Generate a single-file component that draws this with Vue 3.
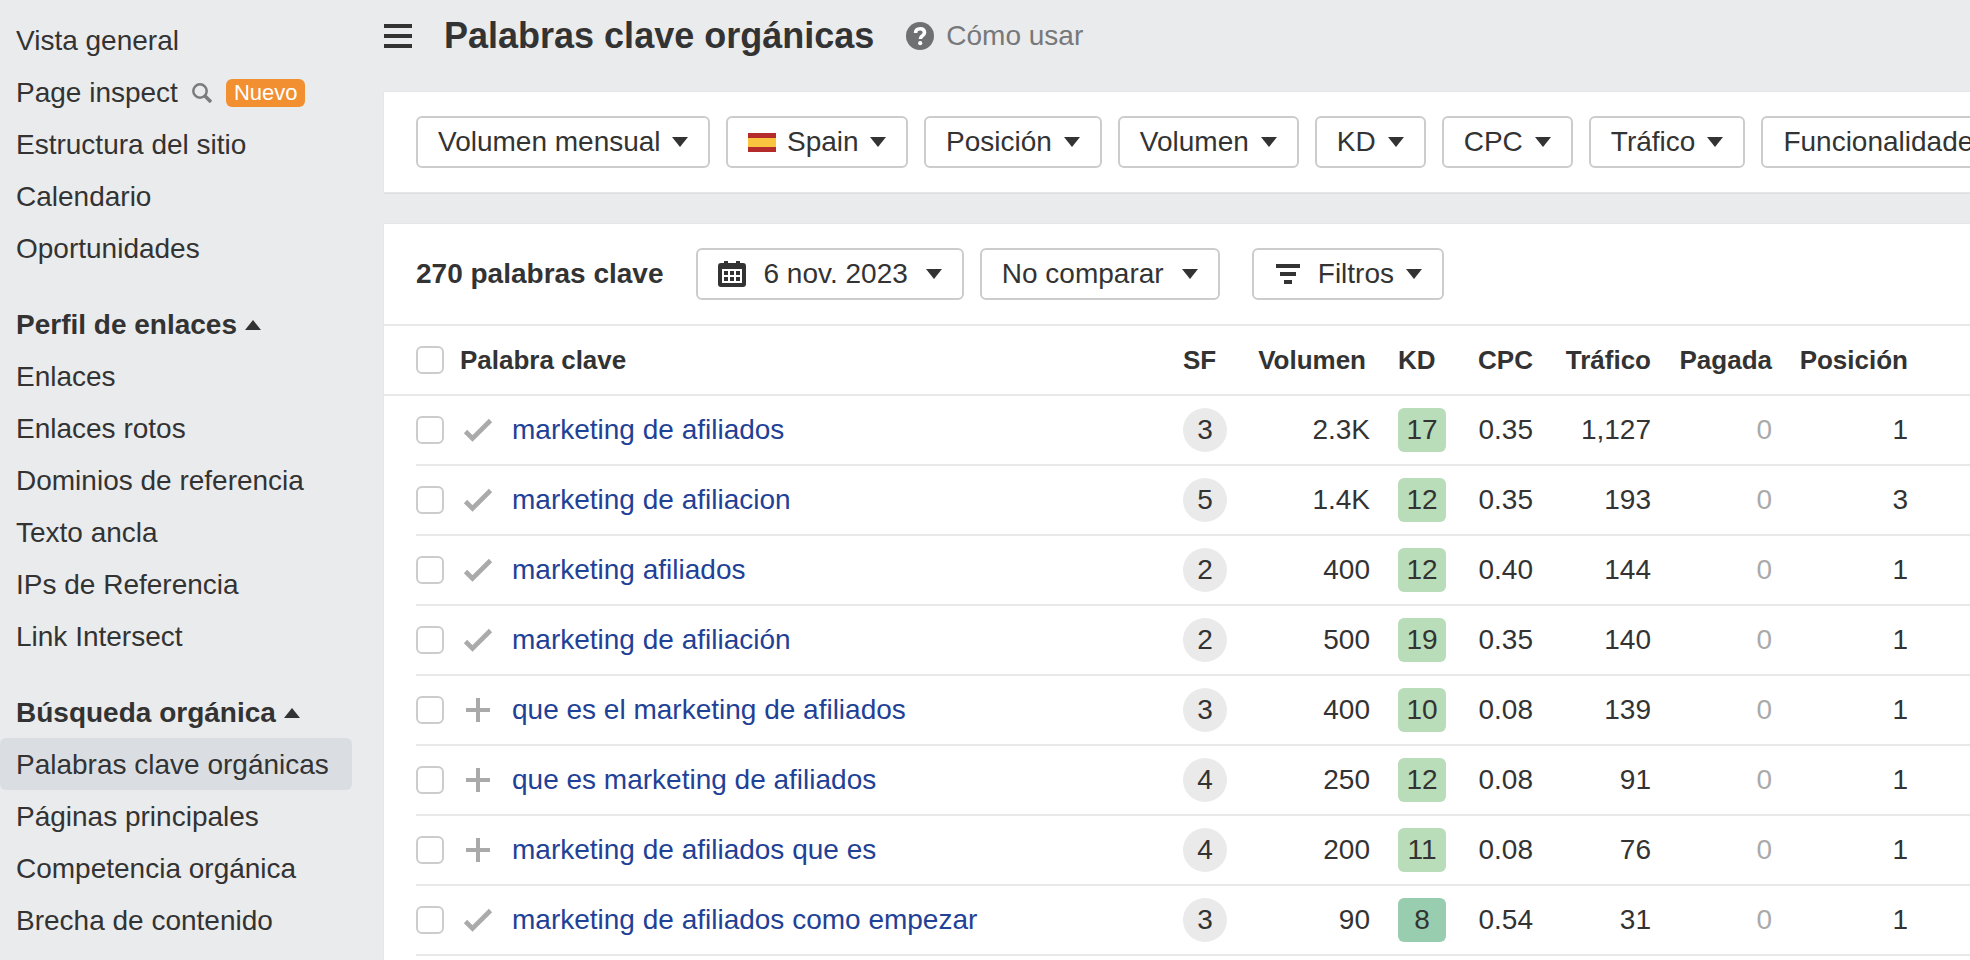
<template>
    <div class="page">
        <nav class="sidebar" v-show="menuOpen">
            <section v-for="(group, i) in groups" :key="i" class="group">
                <button v-if="group.title" type="button" class="group-title" :aria-expanded="group.open" @click="group.open = !group.open">
                    {{ group.title }}
                    <svg class="caret" :class="{ 'caret-up': group.open }" viewBox="0 0 16 10"><path d="M0 0h16L8 10z" /></svg>
                </button>
                <ul v-show="group.open">
                    <li v-for="item in group.items" :key="item">
                        <a href="#" class="nav-link" :class="{ active: item === current }" @click.prevent="current = item">
                            {{ item }}
                            <template v-if="item === 'Page inspect'">
                                <svg class="search" viewBox="0 0 20 20">
                                    <circle cx="8" cy="8" r="6.7" />
                                    <path d="M13 13l6 6" />
                                </svg>
                                <span class="badge-new">Nuevo</span>
                            </template>
                        </a>
                    </li>
                </ul>
            </section>
        </nav>

        <main class="content">
            <header class="header">
                <button type="button" class="burger" aria-label="Menú" @click="menuOpen = !menuOpen">
                    <svg viewBox="0 0 28 24"><path d="M0 0h28v4H0zM0 10h28v4H0zM0 20h28v4H0z" /></svg>
                </button>
                <h1>Palabras clave orgánicas</h1>
                <a href="#" class="help">
                    <svg viewBox="0 0 28 28">
                        <circle cx="14" cy="14" r="14" />
                        <path class="mark" d="M9.6 11c0-2.6 1.8-4.2 4.5-4.2s4.4 1.5 4.4 3.8c0 1.6-.8 2.4-2.1 3.2-1.4.9-2 1.4-2 3.1" />
                        <circle class="dot" cx="14.2" cy="21.2" r="2.1" />
                    </svg>
                    Cómo usar
                </a>
            </header>

            <section class="panel filters">
                <div class="control value">
                    <select aria-label="Volumen">
                        <option>Volumen mensual</option>
                    </select>
                    <svg class="caret" viewBox="0 0 16 10"><path d="M0 0h16L8 10z" /></svg>
                </div>
                <div class="control value">
                    <svg class="flag" viewBox="0 0 28 19">
                        <path fill="#b52a2a" d="M0 0h28v19H0z" />
                        <path fill="#f9c440" d="M0 5h28v9H0z" />
                    </svg>
                    <select aria-label="País">
                        <option>Spain</option>
                    </select>
                    <svg class="caret" viewBox="0 0 16 10"><path d="M0 0h16L8 10z" /></svg>
                </div>
                <button v-for="f in filters" :key="f" type="button" class="control" aria-haspopup="true">
                    {{ f }}
                    <svg class="caret" viewBox="0 0 16 10"><path d="M0 0h16L8 10z" /></svg>
                </button>
            </section>

            <section class="panel results">
                <div class="toolbar">
                    <h2>270 palabras clave</h2>
                    <div class="tools">
                        <button type="button" class="control wide" aria-haspopup="true">
                            <svg class="calendar" viewBox="0 0 28 26">
                                <path d="M6 0h4v2h8V0h4v2h3a3 3 0 0 1 3 3v18a3 3 0 0 1-3 3H3a3 3 0 0 1-3-3V5a3 3 0 0 1 3-3h3z" />
                                <path fill="#fff" d="M4 8h20v14H4z" />
                                <path d="M6 10h4v4H6zM12 10h4v4h-4zM18 10h4v4h-4zM6 16h4v4H6zM12 16h4v4h-4zM18 16h4v4h-4z" />
                            </svg>
                            6 nov. 2023
                            <svg class="caret" viewBox="0 0 16 10"><path d="M0 0h16L8 10z" /></svg>
                        </button>
                        <div class="control wide">
                            <select aria-label="Comparar">
                                <option>No comparar</option>
                            </select>
                            <svg class="caret" viewBox="0 0 16 10"><path d="M0 0h16L8 10z" /></svg>
                        </div>
                    </div>
                    <button type="button" class="control" aria-haspopup="true">
                        <svg class="funnel" viewBox="0 0 28 20"><path d="M2 0h24v4H2zM6 8h16v4H6zM10 16h8v4h-8z" /></svg>
                        Filtros
                        <svg class="caret" viewBox="0 0 16 10"><path d="M0 0h16L8 10z" /></svg>
                    </button>
                </div>

                <table>
                    <colgroup>
                        <col class="c-edge"><col class="c-check"><col class="c-state"><col>
                        <col class="c-sf"><col class="c-volume"><col class="c-kd"><col class="c-cpc">
                        <col class="c-traffic"><col class="c-paid"><col class="c-position"><col class="c-tail">
                    </colgroup>
                    <thead>
                        <tr>
                            <td></td>
                            <td><input type="checkbox" v-model="all" aria-label="Seleccionar todo"></td>
                            <th colspan="2" class="left">Palabra clave</th>
                            <th class="left">SF</th>
                            <th class="volume">Volumen</th>
                            <th class="left">KD</th>
                            <th>CPC</th>
                            <th>Tráfico</th>
                            <th>Pagada</th>
                            <th>Posición</th>
                            <td></td>
                        </tr>
                    </thead>
                    <tbody>
                        <tr v-for="row in rows" :key="row.keyword">
                            <td class="edge"></td>
                            <td class="left"><input type="checkbox" v-model="row.checked" :aria-label="row.keyword"></td>
                            <td class="left">
                                <svg v-if="row.added" class="state check" viewBox="0 0 36 28"><path d="M5.5 15.5l7 7L30.5 4.500" /></svg>
                                <svg v-else class="state" viewBox="0 0 36 28"><path d="M6 14h24M18 2v24" /></svg>
                            </td>
                            <td class="left"><a href="#" class="keyword">{{ row.keyword }}</a></td>
                            <td class="left"><span class="sf">{{ row.sf }}</span></td>
                            <td class="volume">{{ row.volume }}</td>
                            <td class="left"><span class="kd" :class="{ easy: row.kd < 10 }">{{ row.kd }}</span></td>
                            <td>{{ row.cpc }}</td>
                            <td>{{ row.traffic }}</td>
                            <td class="muted">0</td>
                            <td>{{ row.position }}</td>
                            <td></td>
                        </tr>
                    </tbody>
                </table>
            </section>
        </main>
    </div>
</template>

<script setup>
import { ref, reactive, computed } from 'vue'

const menuOpen = ref(true)
const current = ref('Palabras clave orgánicas')

const groups = reactive([
    {
        title: '',
        open: true,
        items: ['Vista general', 'Page inspect', 'Estructura del sitio', 'Calendario', 'Oportunidades']
    },
    {
        title: 'Perfil de enlaces',
        open: true,
        items: ['Enlaces', 'Enlaces rotos', 'Dominios de referencia', 'Texto ancla', 'IPs de Referencia', 'Link Intersect']
    },
    {
        title: 'Búsqueda orgánica',
        open: true,
        items: ['Palabras clave orgánicas', 'Páginas principales', 'Competencia orgánica', 'Brecha de contenido']
    }
])

const filters = ['Posición', 'Volumen', 'KD', 'CPC', 'Tráfico', 'Funcionalidades']

const rows = reactive([
    { keyword: 'marketing de afiliados', added: true, sf: 3, volume: '2.3K', kd: 17, cpc: '0.35', traffic: '1,127', position: 1, checked: false },
    { keyword: 'marketing de afiliacion', added: true, sf: 5, volume: '1.4K', kd: 12, cpc: '0.35', traffic: '193', position: 3, checked: false },
    { keyword: 'marketing afiliados', added: true, sf: 2, volume: '400', kd: 12, cpc: '0.40', traffic: '144', position: 1, checked: false },
    { keyword: 'marketing de afiliación', added: true, sf: 2, volume: '500', kd: 19, cpc: '0.35', traffic: '140', position: 1, checked: false },
    { keyword: 'que es el marketing de afiliados', added: false, sf: 3, volume: '400', kd: 10, cpc: '0.08', traffic: '139', position: 1, checked: false },
    { keyword: 'que es marketing de afiliados', added: false, sf: 4, volume: '250', kd: 12, cpc: '0.08', traffic: '91', position: 1, checked: false },
    { keyword: 'marketing de afiliados que es', added: false, sf: 4, volume: '200', kd: 11, cpc: '0.08', traffic: '76', position: 1, checked: false },
    { keyword: 'marketing de afiliados como empezar', added: true, sf: 3, volume: '90', kd: 8, cpc: '0.54', traffic: '31', position: 1, checked: false }
])

const all = computed({
    get: () => rows.every(row => row.checked),
    set: (value) => rows.forEach(row => { row.checked = value })
})
</script>

<style>
body {
    margin: 0;
    background: #eaebed;
}
</style>

<style scoped>
.page {
    display: flex;
    min-height: 100vh;
    overflow: hidden;
    font-family: "Liberation Sans", Arial, sans-serif;
    font-size: 28px;
    line-height: 32px;
    color: #333;
    background: #eaebed;
}
svg {
    display: block;
    flex: none;
    fill: currentColor;
}
button,
select {
    font: inherit;
    color: inherit;
    background: none;
    border: 0;
    padding: 0;
    cursor: pointer;
}
.caret {
    width: 16px;
    height: 10px;
}
.caret-up {
    transform: rotate(180deg);
}

/* sidebar */
.sidebar {
    flex: none;
    width: 352px;
    margin-right: 32px;
    padding-top: 14px;
}
.group + .group {
    margin-top: 24px;
}
.group ul {
    list-style: none;
    margin: 0;
    padding: 0;
}
.group-title,
.nav-link {
    box-sizing: border-box;
    display: flex;
    align-items: center;
    width: 100%;
    height: 52px;
    padding: 2px 16px 0;
    white-space: nowrap;
}
.group-title {
    gap: 8px;
    font-weight: bold;
}
.nav-link {
    gap: 14px;
    border-radius: 6px;
    color: inherit;
    text-decoration: none;
}
.nav-link.active {
    background: #dadee3;
}
.search {
    width: 20px;
    height: 20px;
    fill: none;
    stroke: #7b7b7d;
    stroke-width: 2.5;
}
.search path {
    stroke-width: 3.5;
}
.badge-new {
    padding: 0 8px;
    border-radius: 6px;
    background: #f28f31;
    color: #fff;
    font-size: 22px;
    line-height: 28px;
}

/* header */
.content {
    display: flex;
    flex: 1;
    flex-direction: column;
    min-width: 0;
}
.header {
    display: flex;
    align-items: center;
    height: 72px;
    margin-bottom: 20px;
}
.burger svg {
    width: 28px;
    height: 24px;
}
.header h1 {
    margin: 0 32px;
    font-size: 36px;
    line-height: 40px;
}
.help {
    display: flex;
    align-items: center;
    gap: 12px;
    color: #77787a;
    text-decoration: none;
}
.help svg {
    width: 28px;
    height: 28px;
    color: #6f7072;
}
.help .mark {
    fill: none;
    stroke: #fff;
    stroke-width: 3.6;
}
.help .dot {
    fill: #fff;
}

/* panels */
.panel {
    background: #fff;
    box-shadow: 0 0 0 1px #e4e6e8, 0 2px 0 #dcdee0;
}
.filters {
    display: flex;
    gap: 16px;
    padding: 24px 32px;
    margin-bottom: 32px;
}
.results {
    flex: 1;
}
.control {
    box-sizing: border-box;
    display: flex;
    flex: none;
    align-items: center;
    gap: 12px;
    height: 52px;
    padding: 0 20px;
    border: 2px solid #ccc;
    border-radius: 6px;
    background: #fff;
    white-space: nowrap;
}
.control.value {
    gap: 11px;
}
.control.wide {
    gap: 18px;
}
select {
    appearance: none;
    outline: none;
}
.flag {
    width: 28px;
    height: 19px;
}
.toolbar {
    display: flex;
    align-items: center;
    gap: 32px;
    padding: 24px 32px;
    border-bottom: 2px solid #e9e9e9;
}
.toolbar h2 {
    margin: 0;
    font-size: 28px;
    line-height: 32px;
    white-space: nowrap;
}
.tools {
    display: flex;
    gap: 16px;
}
.calendar {
    width: 28px;
    height: 26px;
}
.funnel {
    width: 28px;
    height: 20px;
    margin-right: 4px;
}

/* table */
table {
    width: 100%;
    table-layout: fixed;
    border-collapse: separate;
    border-spacing: 0;
}
.c-edge { width: 32px; }
.c-check { width: 44px; }
.c-state { width: 52px; }
.c-sf { width: 48px; }
.c-volume { width: 167px; }
.c-kd { width: 48px; }
.c-cpc { width: 87px; }
.c-traffic { width: 118px; }
.c-paid { width: 121px; }
.c-position { width: 136px; }
.c-tail { width: 62px; }
td,
th {
    height: 68px;
    padding: 0;
    border-bottom: 2px solid #e9e9e9;
    text-align: right;
    white-space: nowrap;
}
th {
    font-size: 26px;
}
.left {
    text-align: left;
}
.edge {
    border-bottom-color: transparent;
}
td.volume {
    padding-right: 28px;
}
th.volume {
    padding-right: 32px;
}
.muted {
    color: #aaa;
}
input[type="checkbox"] {
    appearance: none;
    box-sizing: border-box;
    display: block;
    width: 28px;
    height: 28px;
    margin: 0;
    border: 2px solid #ccc;
    border-radius: 6px;
    background: #fff;
}
input[type="checkbox"]:checked {
    background: #1f4196;
}
.state {
    width: 36px;
    height: 28px;
    fill: none;
    stroke: #aaa;
    stroke-width: 4;
}
.state.check {
    stroke-width: 4.6;
}
.keyword {
    color: #1f4196;
    text-decoration: none;
}
.sf,
.kd {
    display: block;
    height: 44px;
    line-height: 44px;
    text-align: center;
}
.sf {
    width: 44px;
    border-radius: 50%;
    background: #eaeaea;
}
.kd {
    width: 48px;
    border-radius: 6px;
    background: #b9dcb9;
}
.kd.easy {
    background: #98ceaf;
}
</style>
